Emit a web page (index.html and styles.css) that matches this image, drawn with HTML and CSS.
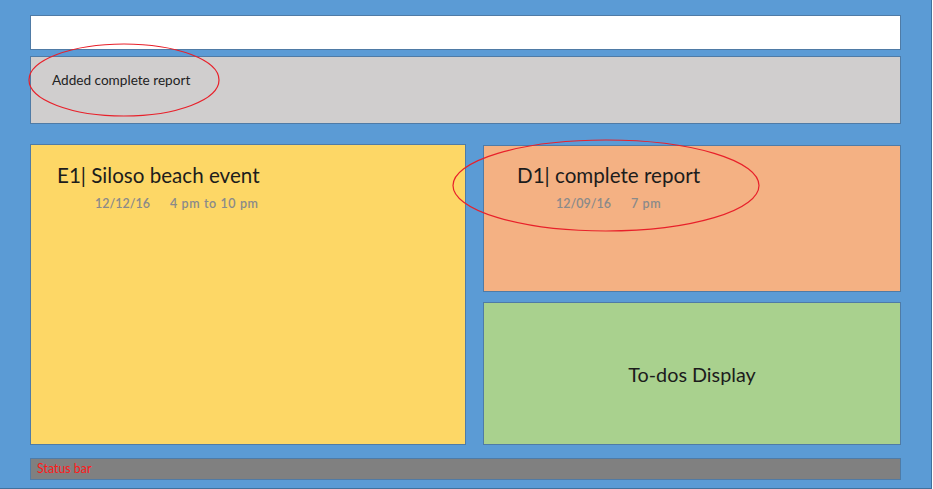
FILE: index.html
```html
<!DOCTYPE html>
<html>
<head>
<meta charset="utf-8">
<link rel="stylesheet" href="styles.css">
</head>
<body>
<div class="app">
  <div class="command-box"></div>
  <div class="feedback"><span class="feedback-text">Added complete report</span></div>
  <div class="main">
    <div class="card events">
      <div class="title">E1| Siloso beach event</div>
      <div class="meta meta-e"><span>12/12/16</span><span>4 pm to 10 pm</span></div>
    </div>
    <div class="right-col">
      <div class="card deadlines">
        <div class="title">D1| complete report</div>
        <div class="meta meta-d"><span>12/09/16</span><span>7 pm</span></div>
      </div>
      <div class="card todos">
        <div class="todos-label">To-dos Display</div>
      </div>
    </div>
  </div>
  <div class="status">Status bar</div>
  <svg class="annotations" width="933" height="489" viewBox="0 0 933 489">
    <ellipse cx="124" cy="80" rx="95" ry="36" fill="none" stroke="#E8202A" stroke-width="1.2"/>
    <ellipse cx="606" cy="185.5" rx="153" ry="45.5" fill="none" stroke="#E8202A" stroke-width="1.2"/>
  </svg>
</div>
</body>
</html>
```
FILE: styles.css
```css
html, body {
  margin: 0;
  padding: 0;
  background: #fff;
}
.app {
  position: relative;
  box-sizing: border-box;
  width: 932px;
  height: 489px;
  background: #5B9BD5;
  border-right: 1px solid #41719C;
  border-bottom: 1px solid #41719C;
  padding: 15px 30px 0 30px;
  display: flex;
  flex-direction: column;
  font-family: "Lato", "Open Sans", sans-serif;
}
.command-box {
  box-sizing: border-box;
  height: 35px;
  background: #fff;
  border: 1px solid #4F7BA6;
}
.feedback {
  box-sizing: border-box;
  margin-top: 6px;
  height: 68px;
  background: #D0CECE;
  border: 1px solid #4F7BA6;
  padding: 12px 0 0 21px;
}
.feedback-text {
  font-size: 13.6px;
  color: #222;
}
.main {
  margin-top: 20px;
  height: 301px;
  display: flex;
  gap: 17px;
}
.card {
  box-sizing: border-box;
  border: 1px solid #4F7BA6;
}
.events {
  width: 436px;
  background: #FDD766;
  padding: 18px 0 0 26px;
}
.right-col {
  flex: 1;
  display: flex;
  flex-direction: column;
  gap: 10px;
}
.deadlines {
  margin-top: 1px;
  height: 147px;
  background: #F4B183;
  padding: 17px 0 0 33px;
}
.todos {
  flex: 1;
  background: #A9D18E;
  display: flex;
  align-items: center;
  justify-content: center;
}
.title {
  font-size: 20.6px;
  color: #1c1c1c;
  line-height: 24px;
}
.meta {
  margin-top: 9px;
  font-size: 12.5px;
  font-weight: 600;
  color: #8a8a8a;
  display: flex;
  gap: 20px;
}
.meta-e { padding-left: 38px; }
.meta-e span:last-child { letter-spacing: 0.6px; }
.meta-d { padding-left: 39px; gap: 20px; }
.meta-d span:last-child { letter-spacing: 0.6px; }
.todos-label {
  font-size: 19.8px;
  color: #1c1c1c;
  margin-left: 0;
}
.status {
  box-sizing: border-box;
  margin-top: 13px;
  height: 22px;
  background: #808080;
  border: 1px solid #4F7BA6;
  color: #FF1A1A;
  font-size: 12.4px;
  line-height: 16px;
  padding: 2px 0 0 6px;
}
.annotations {
  position: absolute;
  left: 0;
  top: 0;
  pointer-events: none;
}
```
